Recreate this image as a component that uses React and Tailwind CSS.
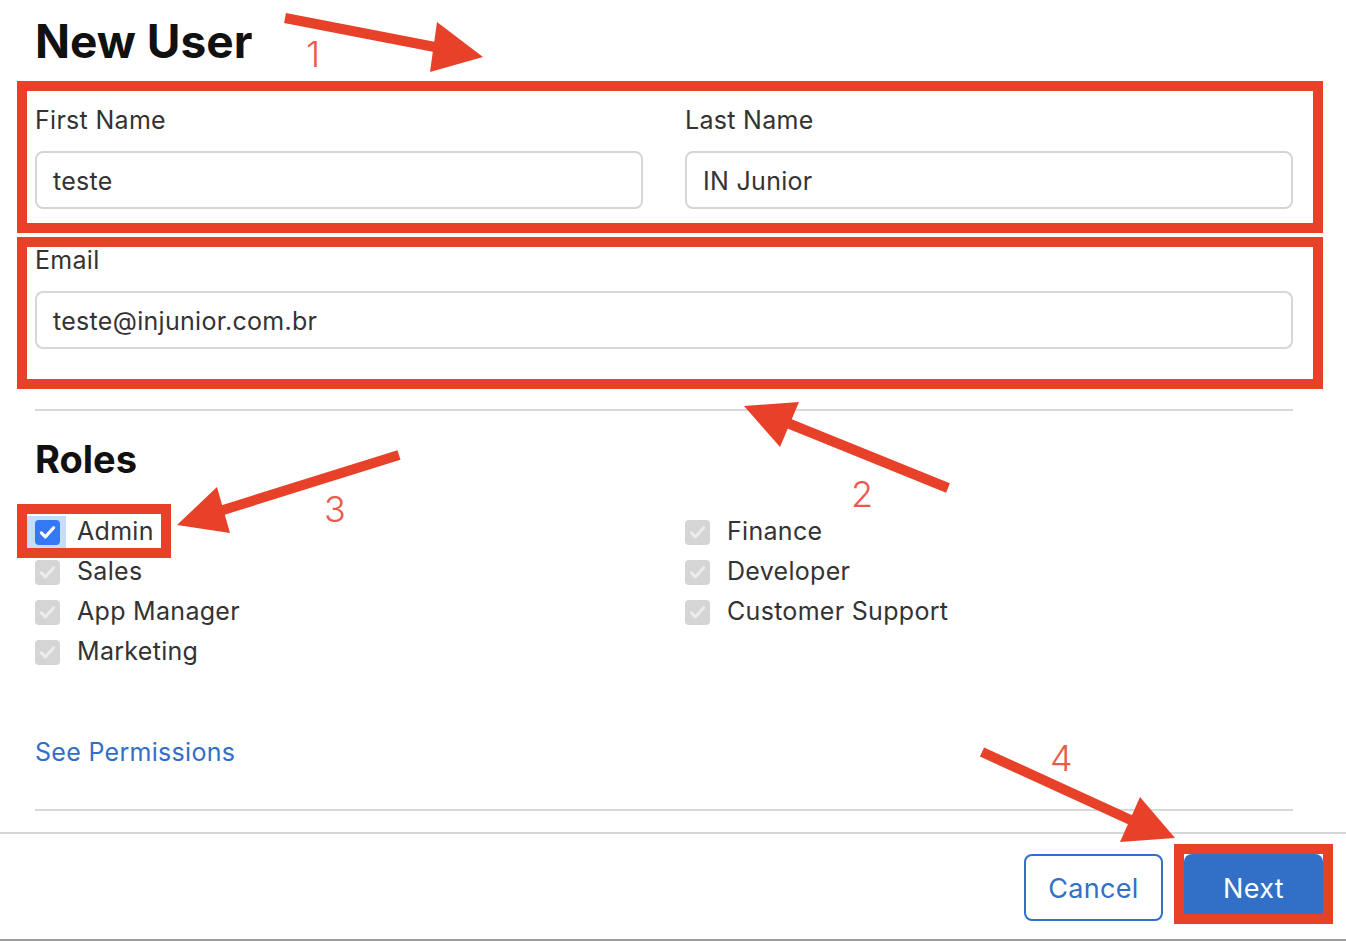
import React from "react";

const roles = [
  { name: "Admin", checked: true },
  { name: "Finance" },
  { name: "Sales" },
  { name: "Developer" },
  { name: "App Manager" },
  { name: "Customer Support" },
  { name: "Marketing" },
];

const Check = ({ color }) => (
  <svg viewBox="0 0 24 24" className="h-[21px] w-[21px]" fill="none">
    <path d="M5 12.5l4.5 4.5L19 6.5" stroke={color} strokeWidth="3.6" strokeLinecap="round" strokeLinejoin="round" />
  </svg>
);

const RoleItem = ({ name, checked }) => (
  <label className="flex h-[40px] items-center gap-[17px] pt-[2px] text-[25px] tracking-[0.3px] text-[#333]">
    <span className="relative flex h-[25px] w-[25px] items-center justify-center">
      {checked && <span className="absolute -top-[4px] -bottom-[4px] -left-[8px] -right-[6px] bg-[#c6dcf8]" />}
      <span
        className={
          checked
            ? "relative flex h-[25px] w-[25px] items-center justify-center rounded-[4px] bg-[#3478f6]"
            : "relative flex h-[25px] w-[25px] items-center justify-center rounded-[4px] bg-[#d5d5d5]"
        }
      >
        <Check color={checked ? "#ffffff" : "#ececec"} />
      </span>
    </span>
    {name}
  </label>
);

const Field = ({ label, value }) => (
  <div className="flex flex-col">
    <span className="pt-[1px] text-[25px] leading-none tracking-[0.3px] text-[#333]">{label}</span>
    <div className="mt-[18px] flex h-[58px] items-center rounded-[8px] border-2 border-[#d6d6d6] px-[16px] pt-[3px] text-[25px] tracking-[0.3px] text-[#333]">
      {value}
    </div>
  </div>
);

const Annotations = () => (
  <div className="pointer-events-none absolute inset-0">
    <div className="absolute left-[17px] top-[81px] h-[152px] w-[1306px] border-[10px] border-[#e8412a]" />
    <div className="absolute left-[17px] top-[237px] h-[152px] w-[1306px] border-[10px] border-[#e8412a]" />
    <div className="absolute left-[17px] top-[504px] h-[54px] w-[154px] border-[10px] border-[#e8412a]" />
    <div className="absolute left-[1174px] top-[844px] h-[80px] w-[159px] border-[10px] border-[#e8412a]" />
    <svg className="absolute inset-0" width="1346" height="942">
      <g stroke="#e8412a" strokeWidth="10" fill="#e8412a">
        <line x1="285" y1="18" x2="440" y2="48" />
        <line x1="948" y1="488" x2="785" y2="422" />
        <line x1="399" y1="455" x2="220" y2="511" />
        <line x1="982" y1="752" x2="1135" y2="822" />
      </g>
      <g fill="#e8412a">
        <polygon points="437,22 483,57 430,72" />
        <polygon points="744,406 799,402 780,447" />
        <polygon points="177,525 217,487 230,533" />
        <polygon points="1175,838 1140,797 1120,842" />
      </g>
    </svg>
    <span className="absolute left-[306px] top-[36px] text-[36px] font-light leading-none text-[#ea5a4b]">1</span>
    <span className="absolute left-[851px] top-[476px] text-[36px] font-light leading-none text-[#ea5a4b]">2</span>
    <span className="absolute left-[324px] top-[491px] text-[36px] font-light leading-none text-[#ea5a4b]">3</span>
    <span className="absolute left-[1050px] top-[740px] text-[36px] font-light leading-none text-[#ea5a4b]">4</span>
  </div>
);

export default function App() {
  return (
    <div className="relative h-[942px] w-[1346px] overflow-hidden bg-white font-['Inter','Liberation_Sans',sans-serif]">
      <div className="pl-[35px] pr-[53px]">
        <h1 className="pt-[18px] text-[46px] font-bold leading-none text-[#111]">New User</h1>

        <div className="mt-[43px] grid grid-cols-2 gap-x-[42px]">
          <Field label="First Name" value="teste" />
          <Field label="Last Name" value="IN Junior" />
        </div>

        <div className="mt-[38px]">
          <Field label="Email" value="teste@injunior.com.br" />
        </div>

        <div className="mt-[60px] h-[2px] bg-[#d9d9d9]" />

        <h2 className="mt-[29px] text-[38px] font-bold leading-none text-[#111]">Roles</h2>

        <div className="mt-[33px] grid grid-cols-2 gap-x-[42px]">
          {roles.map((r) => (
            <RoleItem key={r.name} name={r.name} checked={r.checked} />
          ))}
        </div>

        <a className="mt-[69px] block text-[25px] leading-none tracking-[0.3px] text-[#3170c6]">See Permissions</a>

        <div className="mt-[44px] h-[2px] bg-[#d9d9d9]" />
      </div>

      <div className="mt-[21px] h-[2px] bg-[#d6d6d6]" />

      <div className="flex h-[105px] items-start justify-end gap-[21px] pr-[23px] pt-[20px]">
        <button className="h-[67px] w-[139px] rounded-[8px] border-2 border-[#3170c6] bg-white pt-[3px] text-[27px] tracking-[0.3px] text-[#3170c6]">
          Cancel
        </button>
        <button className="h-[67px] w-[139px] rounded-[8px] bg-[#3170c6] pt-[3px] text-[27px] tracking-[0.3px] text-white">
          Next
        </button>
      </div>

      <div className="h-[2px] bg-[#9c9c9c]" />

      <Annotations />
    </div>
  );
}
